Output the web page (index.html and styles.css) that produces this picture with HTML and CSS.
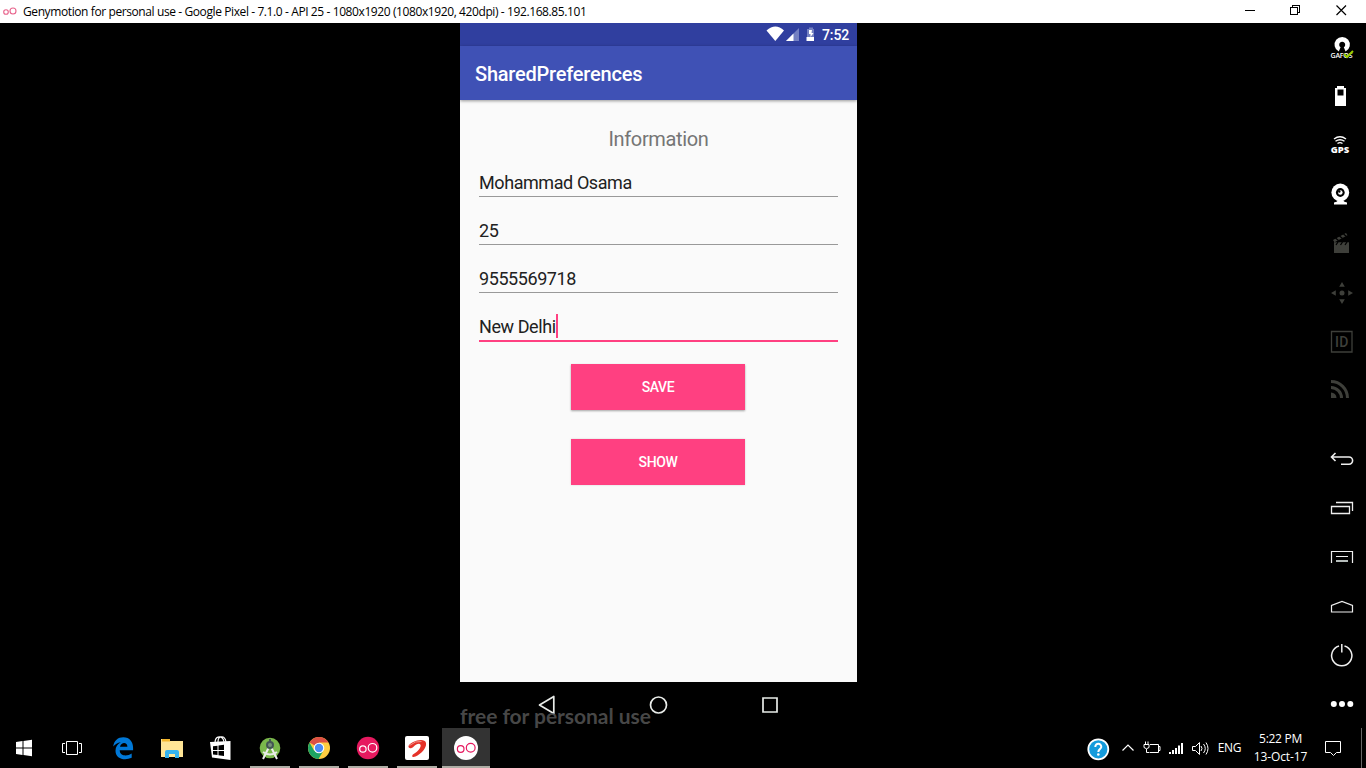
FILE: index.html
```html
<!DOCTYPE html>
<html lang="en">
<head>
<meta charset="utf-8">
<title>Genymotion</title>
<link rel="stylesheet" href="styles.css">
</head>
<body>
<header class="titlebar">
  <svg class="title-logo" width="20" height="23"><g fill="none" stroke="#e8638c" stroke-width="1.1"><circle cx="6" cy="12" r="2.3"/><circle cx="13" cy="11" r="3"/></g></svg>
  <span class="title-text">Genymotion for personal use - Google Pixel - 7.1.0 - API 25 - 1080x1920 (1080x1920, 420dpi) - 192.168.85.101</span>
  <svg class="window-buttons" width="130" height="23" fill="none" stroke="#000" shape-rendering="crispEdges"><path d="M9 10.5h10M54.500 7.500h7v7h-7zM56.500 7v-1.500h7v7h-1.500"/><path d="M100.500 5.500l9.500 9.500M110 5.500l-9.500 9.500" shape-rendering="auto" stroke-width="1.200"/></svg>
</header>

<main class="stage">
  <section class="phone">
    <div class="statusbar">
      <svg width="54" height="23"><path d="M6.500 7.500Q15.500-.5 24 7.500L15.300 18z" fill="#fff"/><path d="M39 5v13H26z" fill="#7480c2"/><path d="M33.500 10.500V18H26z" fill="#fff"/><path d="M47 6h2V4.500h4V6h1.500v12H47z" fill="#7480c2"/><path d="M46.500 14h8v4h-8z" fill="#fff"/><path d="M52 7h-3v4h1.500v3l3-4h-2z" fill="#fff"/></svg>
      <span class="status-time">7:52</span>
    </div>
    <div class="appbar">SharedPreferences</div>
    <div class="content">
      <h1 class="heading">Information</h1>
      <div class="field">Mohammad Osama</div>
      <div class="field">25</div>
      <div class="field">9555569718</div>
      <div class="field field-active">New Delhi<span class="caret"></span></div>
      <div class="button">SAVE</div>
      <div class="button button-last">SHOW</div>
    </div>
    <div class="navbar">
      <svg width="397" height="46" fill="none" stroke="#e8ebe8" stroke-width="1.700"><path d="M93.800 14.500v17L79.500 23z" stroke-linejoin="round"/><circle cx="198.500" cy="23" r="8"/><path d="M303 16h14v14h-14z"/></svg>
      <span class="watermark">free for personal use</span>
    </div>
  </section>

  <aside class="tools">
    <svg class="tool" viewBox="0 0 50 49"><path d="M22.800 28.500A7.700 7.700 0 1 1 29.600 28.500L27.800 24.300A3 3 0 1 0 24.600 24.300z" fill="#fff"/><text class="gaps" x="14.500" y="35" textLength="22">GAFOS</text><path d="M28 31l3 3 6-6" fill="none" stroke="#9c0" stroke-width="2"/></svg>
    <svg class="tool" viewBox="0 0 50 49"><path d="M19 16h2v-2h7v2h2v18H19z" fill="#fff"/><path d="M21.500 17.500h6v6h-6z"/></svg>
    <svg class="tool" viewBox="0 0 50 49"><g fill="none" stroke="#fff" stroke-width="1.400"><path d="M18 18q6-4.500 12 0M19.500 20.300q4.500-3.200 9 0M21.500 22.500q2.500-1.800 5 0"/></g><text class="gps" x="14.800" y="32.300" textLength="18.500" lengthAdjust="spacingAndGlyphs">GPS</text></svg>
    <svg class="tool" viewBox="0 0 50 49"><circle cx="24.300" cy="22.500" r="8.900" fill="#fff"/><path d="M18 34.500v-2q3-.5 4-2h5q1 1.500 4 2v2z" fill="#fff"/><circle cx="24.300" cy="22.500" r="4.400"/><circle cx="24.300" cy="22.500" r="2.300" fill="#fff"/><circle cx="23.300" cy="21.500" r="1.200"/></svg>
    <svg class="tool" viewBox="0 0 50 49"><path d="M18 26h15v8H18zM17 21l13-7 1.500 2.200-13 7zM18 23.300h15V26H18z" fill="#3e3f3a"/><path d="M19.500 19l3 2.500M23.500 17l3 2.500M27.500 15l3 2.500M22 23l-2 3M26.500 23l-2 3M31 23l-2 3" stroke="#000" stroke-width="1.300"/></svg>
    <svg class="tool" viewBox="0 0 50 49" fill="#3e3f3a"><circle cx="26" cy="25" r="2.500"/><path d="M26 14l2.800 4.800h-5.600zM26 36l2.800-4.800h-5.600zM15 25l4.800-2.800v5.600zM37 25l-4.800-2.800v5.600z"/></svg>
    <svg class="tool" viewBox="0 0 50 49"><path d="M15.500 14.500h20.500v20.500H15.500z" fill="none" stroke="#3e3f3a" stroke-width="1.300"/><text class="id" x="19" y="30" textLength="13.500">ID</text></svg>
    <svg class="tool" viewBox="0 0 50 49"><g fill="none" stroke="#3e3f3a" stroke-width="3"><path d="M15 15.500A16.500 16.500 0 0 1 31.500 32M15 21.500A10.500 10.500 0 0 1 25.500 32"/></g><path d="M15 26.500a5.500 5.500 0 0 1 5.500 5.500H15z" fill="#3e3f3a"/></svg>
    <svg class="tool tool-nav" viewBox="0 0 50 49"><path d="M19.500 19l-4 4 4 4M15.500 23H33a3.600 3.600 0 0 1 0 7.200h-8" fill="none" stroke="#eee" stroke-width="1.600"/></svg>
    <svg class="tool" viewBox="0 0 50 49"><path d="M15.500 23.500h18v7h-18zM20 19.500h16.500V28" fill="none" stroke="#eee" stroke-width="1.300"/></svg>
    <svg class="tool" viewBox="0 0 50 49"><path d="M15.500 31V19.500h21V31M20 24.500h12" fill="none" stroke="#eee" stroke-width="1.200"/><path d="M20 28h12v2H20z" fill="#b5bcba"/></svg>
    <svg class="tool" viewBox="0 0 50 49"><path d="M15.500 31V24.500L26 20.500l10.500 4V31z" fill="none" stroke="#eee" stroke-width="1.200"/></svg>
    <svg class="tool" viewBox="0 0 50 49"><path d="M23 16A10.100 10.100 0 1 0 28.500 16M25.800 14v8.500" fill="none" stroke="#eee" stroke-width="1.500"/></svg>
    <svg class="tool" viewBox="0 0 50 49" fill="#fff"><circle cx="17.800" cy="25" r="3"/><circle cx="26" cy="25" r="3"/><circle cx="34.300" cy="25" r="3"/></svg>
  </aside>
</main>

<footer class="taskbar">
  <div class="launchers">
    <svg class="launch" viewBox="0 0 48 40"><path d="M16 14l6.500-1v6.500H16zM23.500 12.900L32 11.800v7.700h-8.500zM16 20.500h6.500V27L16 26zM23.500 20.500H32v7.700L23.500 27z" fill="#fff"/></svg>
    <svg class="launch" viewBox="0 0 48 40"><path d="M18.500 13.500h11v13h-11zM17 15.500h-2.500v9H17M31 15.500h2.500v9H31" fill="none" stroke="#fff"/></svg>
    <svg class="launch" viewBox="0 0 48 40"><path d="M14.200 18.500C15 12.500 19 9.200 24.300 9.200c6.500 0 9.800 4.800 9.800 10.800v2.300H20.700c.2 6.500 8 6 12 3.200v4.300c-7.500 3.400-16.200.8-16.200-7.100 0-4 2-6.800 5.300-8.500-3.300.3-5.700 2-7.600 4.300zM21 18.700h7.400c0-4.800-6.200-4.800-7.400 0z" fill="#0078d7"/></svg>
    <svg class="launch" viewBox="0 0 48 40"><path d="M13 11h8l1 2h13v16H13z" fill="#ffe596"/><path d="M14 11h8v2.500h-8z" fill="#f4b62c"/><path d="M17 30v-6q0-2 2-2h10q2 0 2 2v6h-4v-4h-6v4z" fill="#35b3ee"/></svg>
    <svg class="launch" viewBox="0 0 48 40"><path d="M18 15c0-8 8-8 9-1M21 14c0-7 7-7 8 0" fill="none" stroke="#fff" stroke-width="1.200"/><path d="M13 14l20.500-1v19L15 29.500z" fill="#fff"/><path d="M16 18.200l4.500-.5V22H16zM21.500 17.500l5.500-.8V22h-5.500zM16 23h4.500v4l-4.500-.5zM21.500 23H27v5l-5.500-.8z"/></svg>
    <svg class="launch running" viewBox="0 0 48 40"><circle cx="24" cy="20" r="10.300" fill="#7ab84b"/><path d="M22.500 20l-5.500 11M25.500 20l5.500 11" stroke="#eee" stroke-width="2"/><path d="M17 24q7 5 14 0" fill="none" stroke="#e7ece5" stroke-width="2"/><circle cx="24" cy="17" r="3" fill="#77917a" stroke="#435653" stroke-width="2"/><path d="M24 11v3" stroke="#435653" stroke-width="2"/></svg>
    <svg class="launch running" viewBox="0 0 48 40"><circle cx="24" cy="20" r="11" fill="#ffcd41"/><path d="M24 20L14.500 14.500A11 11 0 0 1 33.500 14.500H24z" fill="#dd5044"/><path d="M14.500 14.500A11 11 0 0 0 23.500 31l5-8.500-9.500 0z" fill="#1da362"/><circle cx="24" cy="20" r="5.300" fill="#fff"/><circle cx="24" cy="20" r="4.200" fill="#4c8bf5"/></svg>
    <svg class="launch running" viewBox="0 0 48 40"><circle cx="24" cy="20" r="11.200" fill="#e6195f"/><g fill="none" stroke="#fff" stroke-width="1.200"><circle cx="18.900" cy="21" r="3.200"/><circle cx="28.500" cy="19.800" r="4.300"/></g></svg>
    <svg class="launch running" viewBox="0 0 48 40"><rect x="12" y="8" width="24" height="24" rx="2" fill="#fff"/><path d="M15.500 18c1-4 16-9.500 17.500-3 1 5-5 11-10.500 13.500-3.500 1.500-4.500-1-1.500-2.800 4-2.400 7.500-6.500 6.500-9-1-2-4.500-.5-7 2-2.500 2.500-5.500 1.500-5-.7z" fill="#e53229"/><path d="M16.500 17.500q6-5 12-4" fill="none" stroke="#f3948c"/></svg>
    <svg class="launch running active" viewBox="0 0 48 40"><circle cx="24" cy="20" r="12" fill="#fff"/><g fill="none" stroke="#e6195f" stroke-width="1.200"><circle cx="18.700" cy="21" r="3.300"/><circle cx="28.700" cy="19.800" r="4.400"/></g></svg>
  </div>
  <div class="tray">
    <svg width="24" height="40"><circle cx="12.300" cy="21.300" r="10" fill="#149bdc" stroke="#fff" stroke-width="1.800"/><path d="M9.300 19c0-4.500 6.200-4 6 0-.2 2-3 2.200-3 5" fill="none" stroke="#fff" stroke-width="2"/><circle cx="12.300" cy="26.500" r="1.300" fill="#fff"/></svg>
    <svg class="chevron" width="24" height="40"><path d="M6.500 22.500l5.500-5.500 5.500 5.500" fill="none" stroke="#fff" stroke-width="1.200"/></svg>
    <svg width="24" height="40" fill="none" stroke="#fff"><path d="M10 16.500h8.500v8H10M19 18.500h1v4h-1M4 16.500h5v3q-2.500 2.500-5 0zM5.500 16v-2.500M8 16v-2.500M6.500 21v3.500h3"/></svg>
    <svg width="24" height="40" fill="#fff"><path d="M5 24h2v2H5zM8 22h2v4H8zM11 20h2v6h-2zM14 17.500h2V26h-2zM17 15h2v11h-2z"/></svg>
    <svg width="24" height="40" fill="none" stroke="#fff"><path d="M4.500 18.500h3l4-4v12l-4-4h-3zM13 18q2 2.500 0 5M15.500 16q3.500 4.500 0 9M18 14.500q4 6 0 12"/></svg>
    <span class="lang">ENG</span>
    <div class="clock"><span>5:22 PM</span><span class="date">13-Oct-17</span></div>
    <svg width="36" height="40"><path d="M10.500 13.500h15v11h-4l-3 3-3-3h-5z" fill="none" stroke="#fff"/></svg>
    <span class="show-desktop"></span>
  </div>
</footer>
</body>
</html>
```
FILE: styles.css
```css
* { box-sizing: border-box; }
body {
  margin: 0;
  width: 1366px;
  height: 768px;
  overflow: hidden;
  display: flex;
  flex-direction: column;
  background: #000;
  font-family: "Roboto", sans-serif;
}
svg { display: block; flex: none; }

.titlebar {
  height: 23px;
  flex: none;
  display: flex;
  background: #fff;
  color: #000;
}
.title-logo { margin-right: 3px; }
.title-text {
  flex: 1;
  font: 12px/24px "Open Sans", sans-serif;
  letter-spacing: -0.4px;
  white-space: nowrap;
}

.stage {
  height: 705px;
  flex: none;
  display: grid;
  grid-template-columns: 397px 50px;
  justify-content: end;
  column-gap: 459px;
}

.phone { display: flex; flex-direction: column; background: #fafafa; }
.statusbar {
  height: 23px;
  display: flex;
  padding-left: 300px;
  background: #303f9f;
  color: #fff;
}
.status-time { margin-left: 8px; font: 500 14px/24px "Roboto", sans-serif; letter-spacing: -0.1px; }
.appbar {
  height: 54px;
  padding-left: 15px;
  background: #3f51b5;
  color: #fff;
  font-size: 20px;
  letter-spacing: -0.22px;
  font-weight: 500;
  line-height: 56px;
  box-shadow: 0 1px 3px rgba(0, 0, 0, .4);
}
.content { height: 582px; padding: 24px 19px 0; }
.heading {
  margin: 0;
  height: 30px;
  font-size: 20px;
  letter-spacing: -0.35px;
  font-weight: 400;
  line-height: 30px;
  text-align: center;
  color: #757575;
}
.field {
  height: 31px;
  margin: 12px 0 17px;
  border-bottom: 1px solid #999;
  color: #212121;
  font-size: 18px;
  letter-spacing: -0.42px;
  line-height: 33px;
  display: flex;
}
.field-active { border-bottom: 2px solid #ff4081; height: 32px; margin-bottom: 0; }
.caret { width: 2px; height: 24px; margin-top: 4px; background: #ff4081; }
.button {
  width: 174px;
  height: 46px;
  margin: 22px 0 0 92px;
  background: #ff4081;
  color: #fff;
  font-size: 14px;
  letter-spacing: -0.35px;
  font-weight: 500;
  line-height: 47px;
  text-align: center;
  box-shadow: 0 1px 2px rgba(0, 0, 0, .35);
}
.button-last { margin-top: 29px; box-shadow: 0 0 2px rgba(0, 0, 0, .15); }
.navbar { position: relative; height: 46px; background: #000; }
.watermark {
  position: absolute;
  left: 0;
  top: 22px;
  font: 700 21px/24px "Lato", sans-serif;
  letter-spacing: -0.04px;
  color: rgba(88, 88, 88, .82);
  white-space: nowrap;
}

.tools { display: flex; flex-direction: column; }
.tool { width: 50px; height: 49px; }
.tool-nav { margin-top: 19px; }
.gaps { font: 600 7px "Open Sans", sans-serif; fill: #fff; }
.gps { font: 800 8.5px "Open Sans", sans-serif; fill: #fff; }
.id { font: 500 14px "Roboto", sans-serif; fill: #3e3f3a; }

.taskbar { height: 40px; flex: none; display: flex; justify-content: space-between; background: #000; }
.launchers { display: flex; gap: 1px; }
.launch { width: 48px; height: 40px; }
.launch:first-child { margin-right: -1px; }
.launch:nth-child(2) { margin-right: 2px; }
.running {
  background: linear-gradient(#aeada5, #aeada5) center bottom / 40px 2px no-repeat;
}
.active { background-color: #333; background-size: 48px 2px; }
.tray {
  width: 280px;
  display: flex;
  color: #fff;
  font: 12px/17px "Open Sans", sans-serif;
  letter-spacing: -0.3px;
}
.chevron { margin-left: 6px; }
.lang { width: 34px; padding-left: 1px; line-height: 40px; text-align: center; }
.clock { width: 69px; padding: 2px 0 0; display: flex; flex-direction: column; align-items: center; white-space: nowrap; line-height: 18px; }
.date { letter-spacing: -0.1px; }
.show-desktop { width: 1px; margin-left: 10px; background: #666; }
```
